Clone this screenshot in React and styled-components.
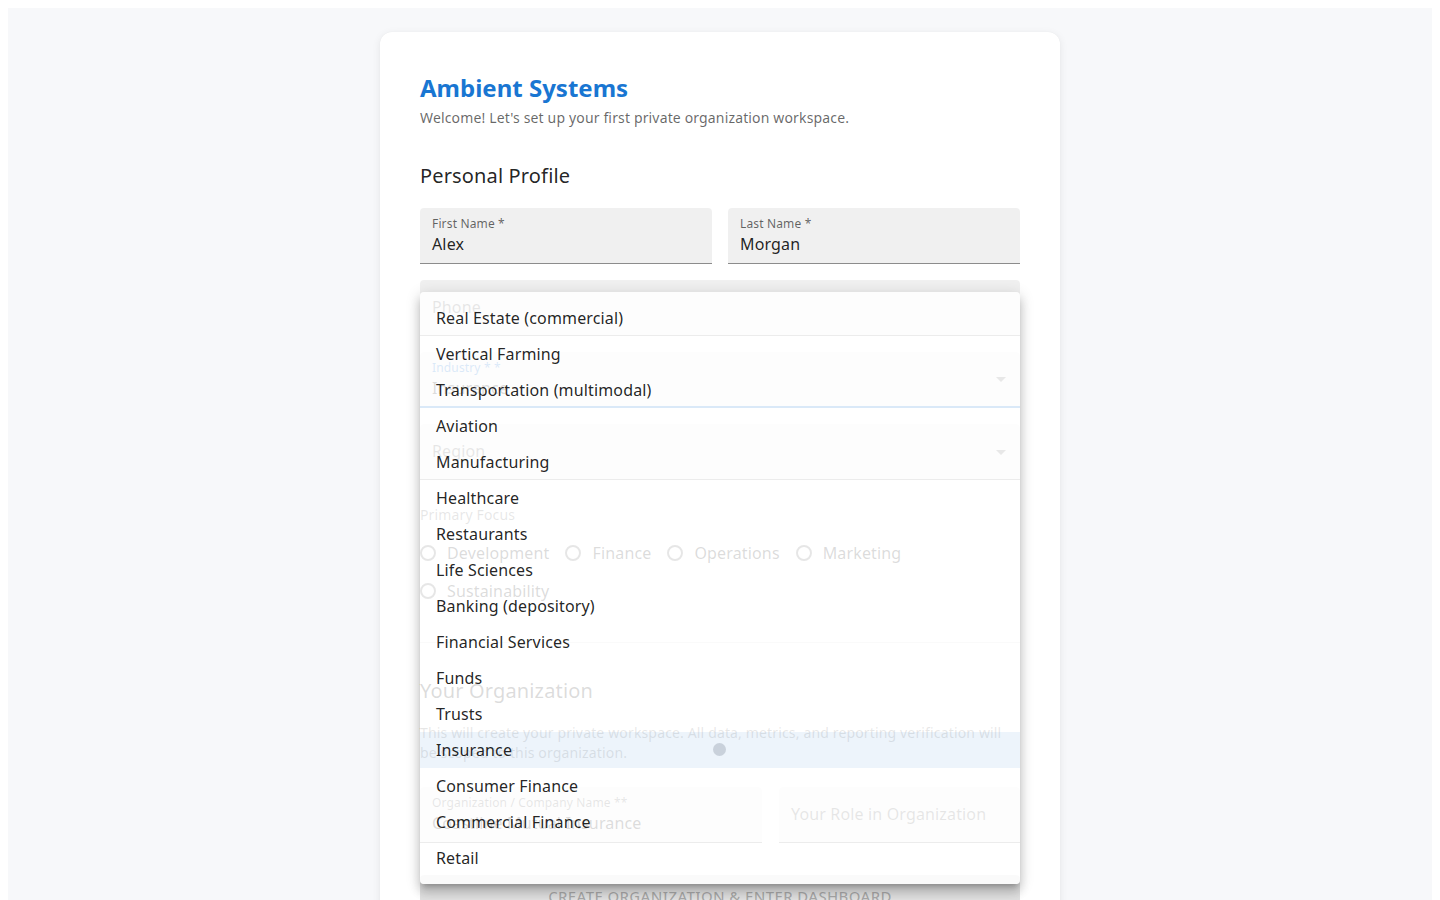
import React from 'react'
import styled, { createGlobalStyle } from 'styled-components'

const industries = [
  'Real Estate (commercial)',
  'Vertical Farming',
  'Transportation (multimodal)',
  'Aviation',
  'Manufacturing',
  'Healthcare',
  'Restaurants',
  'Life Sciences',
  'Banking (depository)',
  'Financial Services',
  'Funds',
  'Trusts',
  'Insurance',
  'Consumer Finance',
  'Commercial Finance',
  'Retail',
]

const focusAreas = ['Development', 'Finance', 'Operations', 'Marketing', 'Sustainability']

function ArrowDown() {
  return (
    <StArrow viewBox="0 0 24 24">
      <path d="M7 10l5 5 5-5z" fill="currentColor" />
    </StArrow>
  )
}

function App() {
  return (
    <>
      <GlobalStyle />
      <StPage>
        <StCard>
          <StTitle>Ambient Systems</StTitle>
          <StSubtitle>Welcome! Let's set up your first private organization workspace.</StSubtitle>

          <StSectionTitle>Personal Profile</StSectionTitle>
          <StFieldStack>
            <StTwoCols>
              <StField>
                <StFieldBody>
                  <StLabel>First Name *</StLabel>
                  <StValue>Alex</StValue>
                </StFieldBody>
              </StField>
              <StField>
                <StFieldBody>
                  <StLabel>Last Name *</StLabel>
                  <StValue>Morgan</StValue>
                </StFieldBody>
              </StField>
            </StTwoCols>
            <StField>
              <StFieldBody $empty>
                <StPlaceholder>Phone</StPlaceholder>
              </StFieldBody>
            </StField>
            <StField $focused>
              <StFieldBody>
                <StLabel $focused>Industry * *</StLabel>
                <StValue>Insurance</StValue>
              </StFieldBody>
              <ArrowDown />
            </StField>
            <StField>
              <StFieldBody $empty>
                <StPlaceholder>Region</StPlaceholder>
              </StFieldBody>
              <ArrowDown />
            </StField>
          </StFieldStack>

          <StGroupLabel>Primary Focus</StGroupLabel>
          <StRadioGroup>
            {focusAreas.map((f) => (
              <StRadioItem key={f}>
                <StRadioCircle />
                {f}
              </StRadioItem>
            ))}
          </StRadioGroup>

          <StDivider />

          <StSectionTitle $tight>Your Organization</StSectionTitle>
          <StDescription>
            This will create your private workspace. All data, metrics, and reporting verification will be scoped to this organization.
          </StDescription>
          <StOrgRow>
            <StField>
              <StFieldBody>
                <StLabel>Organization / Company Name **</StLabel>
                <StValue>Coastline Mutual Insurance</StValue>
              </StFieldBody>
            </StField>
            <StField>
              <StFieldBody $empty>
                <StPlaceholder>Your Role in Organization</StPlaceholder>
              </StFieldBody>
            </StField>
          </StOrgRow>

          <StSubmit disabled>Create Organization &amp; Enter Dashboard</StSubmit>

          <StMenu>
            {industries.map((name) => (
              <StMenuItem key={name} $selected={name === 'Insurance'}>
                {name}
                {name === 'Insurance' && <StRipple />}
              </StMenuItem>
            ))}
          </StMenu>
        </StCard>
      </StPage>
    </>
  )
}

const GlobalStyle = createGlobalStyle`
  body {
    margin: 8px;
    background: #fff;
    font-family: "Noto Sans", "Open Sans", sans-serif;
    color: rgba(0, 0, 0, 0.87);
  }
  * { box-sizing: border-box; }
`
const StPage = styled.div`
  min-height: 100vh;
  background: #f7f8fa;
  padding: 24px 0 40px;
`
const StCard = styled.div`
  position: relative;
  width: 680px;
  margin: 0 auto;
  padding: 40px 40px 48px;
  background: #fff;
  border-radius: 12px;
  box-shadow: 0 2px 8px rgba(0, 0, 0, 0.08), 0 0 1px rgba(0, 0, 0, 0.06);
`
const StTitle = styled.h1`
  margin: 0;
  font-size: 24px;
  line-height: 32px;
  font-weight: 700;
  color: #1976d2;
`
const StSubtitle = styled.p`
  margin: 4px 0 0;
  font-size: 14px;
  line-height: 20px;
  letter-spacing: 0.15px;
  color: rgba(0, 0, 0, 0.6);
`
const StSectionTitle = styled.h2`
  margin: ${(p) => (p.$tight ? '0' : '32px')} 0 16px;
  font-size: 20px;
  line-height: 32px;
  font-weight: 400;
  letter-spacing: 0.15px;
  color: rgba(0, 0, 0, 0.87);
`
const StFieldStack = styled.div`
  display: flex;
  flex-direction: column;
  gap: 16px;
`
const StTwoCols = styled.div`
  display: grid;
  grid-template-columns: 1fr 1fr;
  gap: 16px;
`
const StOrgRow = styled.div`
  display: grid;
  grid-template-columns: 342px 1fr;
  gap: 17px;
  margin-top: 24px;
`
const StField = styled.div`
  display: flex;
  height: 56px;
  padding: 0 7px 0 12px;
  background: rgba(0, 0, 0, 0.06);
  border-radius: 4px 4px 0 0;
  border-bottom: ${(p) => (p.$focused ? '2px solid #1976d2' : '1px solid rgba(0, 0, 0, 0.42)')};
`
const StFieldBody = styled.div`
  flex: 1;
  display: flex;
  flex-direction: column;
  justify-content: ${(p) => (p.$empty ? 'center' : 'flex-start')};
  padding: ${(p) => (p.$empty ? '0 0 2px' : '8px 0 0')};
`
const StLabel = styled.span`
  font-size: 12px;
  line-height: 16px;
  letter-spacing: 0.15px;
  color: ${(p) => (p.$focused ? '#1976d2' : 'rgba(0, 0, 0, 0.6)')};
`
const StValue = styled.span`
  font-size: 16px;
  line-height: 24px;
  letter-spacing: 0.15px;
  color: rgba(0, 0, 0, 0.87);
`
const StPlaceholder = styled.span`
  font-size: 16px;
  line-height: 24px;
  letter-spacing: 0.15px;
  color: rgba(0, 0, 0, 0.6);
`
const StArrow = styled.svg`
  flex: none;
  width: 24px;
  height: 24px;
  align-self: center;
  color: rgba(0, 0, 0, 0.54);
`
const StGroupLabel = styled.div`
  margin-top: 25px;
  font-size: 14px;
  line-height: 20px;
  letter-spacing: 0.15px;
  color: rgba(0, 0, 0, 0.6);
`
const StRadioGroup = styled.div`
  display: flex;
  flex-wrap: wrap;
  column-gap: 16px;
  margin-top: 9px;
`
const StRadioItem = styled.label`
  display: flex;
  align-items: center;
  gap: 11px;
  height: 38px;
  font-size: 16px;
  letter-spacing: 0.15px;
  color: rgba(0, 0, 0, 0.87);
`
const StRadioCircle = styled.span`
  flex: none;
  display: block;
  width: 16px;
  height: 16px;
  border: 2px solid rgba(0, 0, 0, 0.6);
  border-radius: 50%;
`
const StDivider = styled.hr`
  margin: 32px 0;
  border: none;
  border-top: 1px solid rgba(0, 0, 0, 0.12);
`
const StDescription = styled.p`
  margin: 0;
  font-size: 14px;
  line-height: 20px;
  letter-spacing: 0.15px;
  color: rgba(0, 0, 0, 0.6);
`
const StSubmit = styled.button`
  display: block;
  width: 100%;
  height: 42px;
  margin-top: 32px;
  border: none;
  border-radius: 4px;
  background: rgba(0, 0, 0, 0.12);
  color: rgba(0, 0, 0, 0.26);
  font-family: inherit;
  font-size: 15px;
  font-weight: 500;
  letter-spacing: 0.35px;
  text-transform: uppercase;
`
const StMenu = styled.ul`
  position: absolute;
  top: 260px;
  left: 40px;
  width: 600px;
  margin: 0;
  padding: 8px 0;
  list-style: none;
  background: rgba(255, 255, 255, 0.84);
  border-radius: 4px;
  box-shadow: 0px 5px 5px -3px rgba(0, 0, 0, 0.2), 0px 8px 10px 1px rgba(0, 0, 0, 0.14),
    0px 3px 14px 2px rgba(0, 0, 0, 0.12);
`
const StMenuItem = styled.li`
  position: relative;
  height: 36px;
  padding: 6px 16px;
  font-size: 16px;
  line-height: 24px;
  letter-spacing: 0.15px;
  color: rgba(0, 0, 0, 0.87);
  background: ${(p) => (p.$selected ? 'rgba(25, 118, 210, 0.08)' : 'transparent')};
`
const StRipple = styled.span`
  position: absolute;
  left: 293px;
  top: 11px;
  width: 13px;
  height: 13px;
  border-radius: 50%;
  background: rgba(120, 130, 145, 0.3);
`

export default App
